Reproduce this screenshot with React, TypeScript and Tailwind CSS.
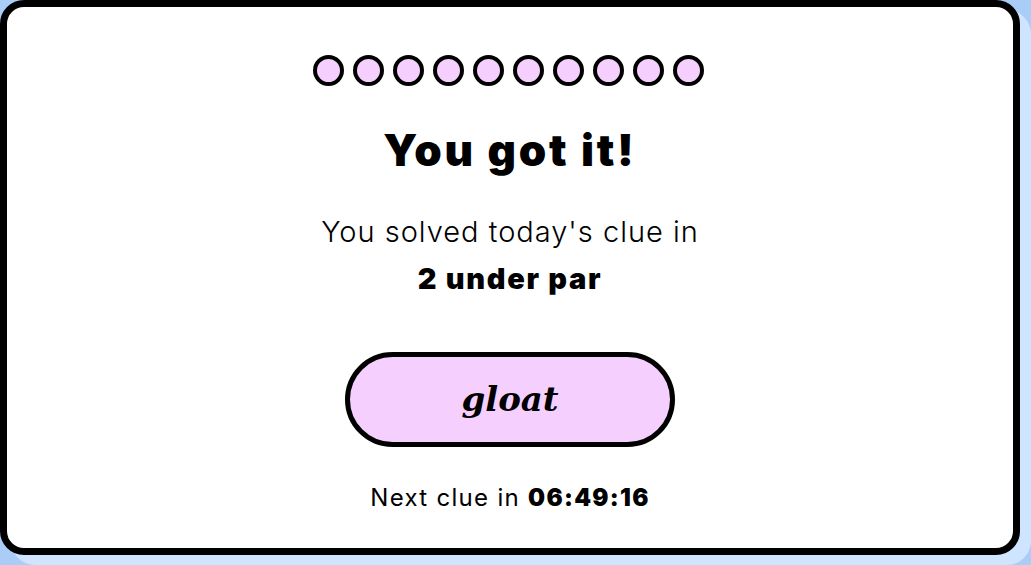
import React from "react";

export default function App() {
  const dots = Array.from({ length: 10 });
  return (
    <div className="w-[1031px] h-[565px] bg-[#a9cdf7] overflow-hidden" style={{ fontFamily: "Inter, 'Noto Sans', sans-serif" }}>
      <div className="w-[1020px] h-[555px] bg-white border-[7px] border-black rounded-[24px] shadow-[11px_10px_0_#cfe4ff] flex flex-col items-center pt-[48px] text-black">
        <div className="flex gap-[9px] -ml-[3px]">
          {dots.map((_, i) => (
            <div key={i} className="w-[31px] h-[31px] rounded-full border-[4px] border-black bg-[#f5d0fe]" />
          ))}
        </div>
        <h1 className="mt-[42px] text-[44px] leading-[44px] font-black tracking-[2.8px]">You got it!</h1>
        <p className="mt-[36px] text-[29px] leading-[47px] font-light text-center tracking-[1px]">
          You solved today's clue in
          <br />
          <span className="font-black tracking-[1.7px]">2 under par</span>
        </p>
        <button className="mt-[50px] w-[330px] h-[95px] rounded-full border-[5px] border-black bg-[#f5d0fe] flex items-center justify-center">
          <span className="text-[34px] font-bold italic tracking-normal" style={{ fontFamily: "'DejaVu Serif', serif" }}>gloat</span>
        </button>
        <p className="mt-[35px] text-[24px] leading-[32px] font-normal tracking-[1.3px]">
          Next clue in <span className="font-black">06:49:16</span>
        </p>
      </div>
    </div>
  );
}
